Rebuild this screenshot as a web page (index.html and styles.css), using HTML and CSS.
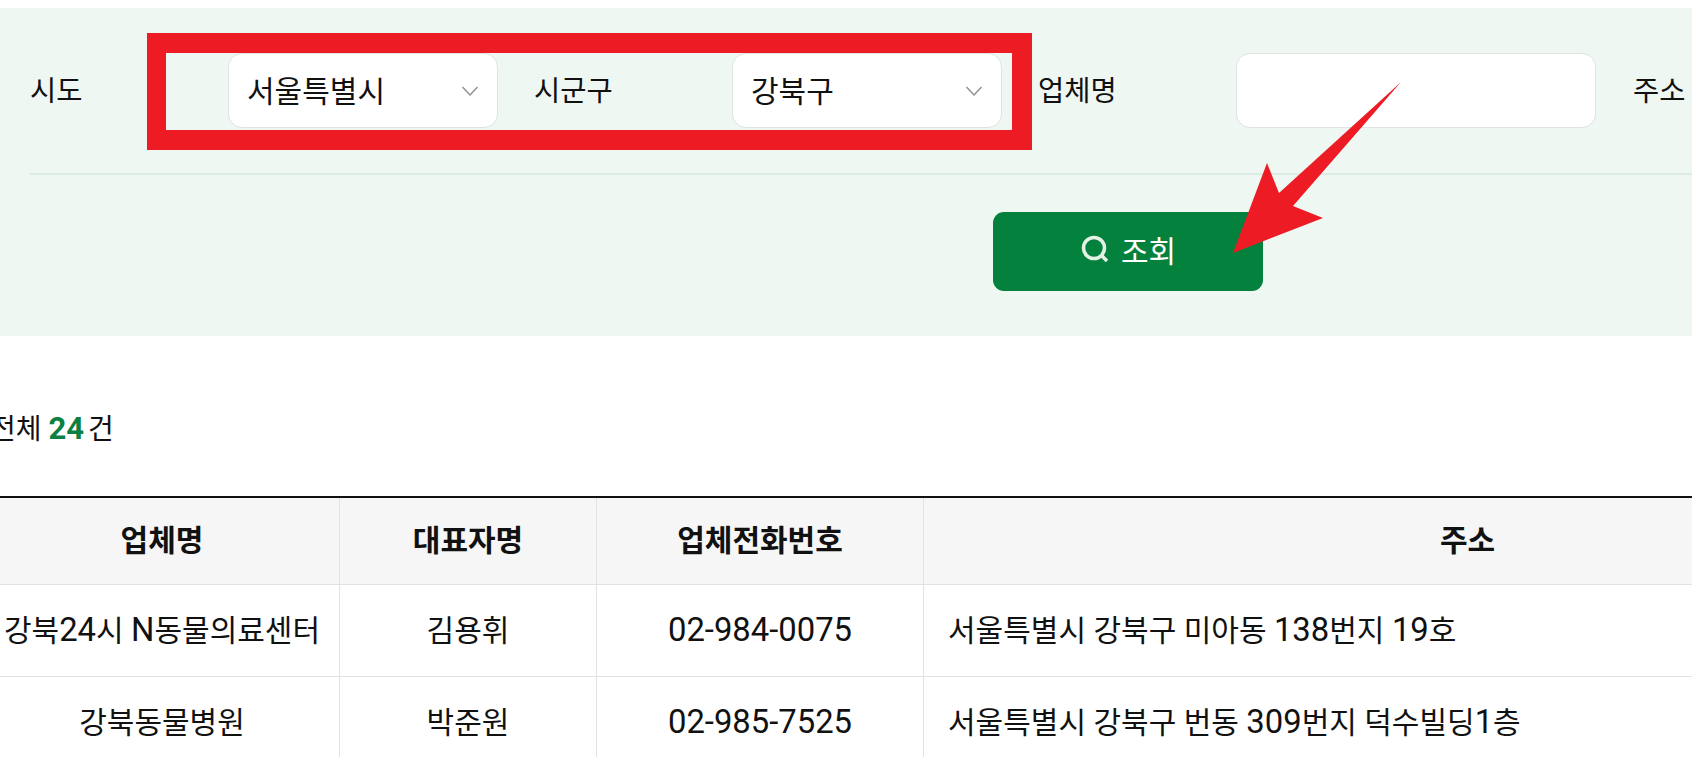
FILE: index.html
```html
<!DOCTYPE html>
<html lang="ko">
<head>
<meta charset="utf-8">
<title>업체 조회</title>
<link rel="stylesheet" href="styles.css">
</head>
<body>
<div class="page">
  <section class="panel">
    <div class="fields">
      <span class="label">시도</span>
      <div class="control select"><span>서울특별시</span><svg class="chev" viewBox="0 0 18 12"><path d="M1.5 2 L9 10 L16.5 2"/></svg></div>
      <span class="label">시군구</span>
      <div class="control select"><span>강북구</span><svg class="chev" viewBox="0 0 18 12"><path d="M1.5 2 L9 10 L16.5 2"/></svg></div>
      <span class="label">업체명</span>
      <div class="control input"></div>
      <span class="label">주소</span>
    </div>
    <div class="actions">
      <button class="search" type="button">
        <svg class="mag" viewBox="0 0 30 30"><circle cx="14" cy="14" r="10.5"/><path d="M21.5 21.5 L27 27"/></svg>
        <span class="search-text">조회</span>
      </button>
    </div>
  </section>
  <div class="wide">
    <p class="total">전체 <b>24</b><span class="unit">건</span></p>
    <table class="list">
      <colgroup><col class="c1"><col class="c2"><col class="c3"><col class="c4"></colgroup>
      <thead>
        <tr><th>업체명</th><th>대표자명</th><th>업체전화번호</th><th>주소</th></tr>
      </thead>
      <tbody>
        <tr><td>강북<span class="num">24</span>시 <span class="num">N</span>동물의료센터</td><td>김용휘</td><td class="phone"><span class="num">02-984-0075</span></td><td class="addr">서울특별시 강북구 미아동 <span class="num">138</span>번지 <span class="num">19</span>호</td></tr>
        <tr><td>강북동물병원</td><td>박준원</td><td class="phone"><span class="num">02-985-7525</span></td><td class="addr">서울특별시 강북구 번동 <span class="num">309</span>번지 덕수빌딩<span class="num">1</span>층</td></tr>
      </tbody>
    </table>
  </div>
  <div class="mark"></div>
  <svg class="arrow" viewBox="0 0 1692 757"><polygon points="1401,82 1293,206 1323,218 1233,253 1267,163 1279,193"/></svg>
</div>
</body>
</html>
```
FILE: styles.css
```css
* { box-sizing: border-box; }
html, body { margin: 0; padding: 0; background: #fff; }
body { font-family: Roboto, "Noto Sans CJK KR", sans-serif; color: #111; }
.page { position: relative; width: 1692px; height: 757px; overflow: hidden; padding-top: 8px; }

.panel { background: #eff7f3; height: 328px; padding: 45px 0 0 30px; }
.fields { display: flex; align-items: center; width: 1800px; padding-bottom: 45px; border-bottom: 2px solid #dcebe4; }
.label { font-size: 28.5px; line-height: 73px; padding-top: 2px; width: 198px; flex: none; }
.control { height: 75px; flex: none; background: #fff; border: 1px solid #dfe3e1; border-radius: 14px; margin-right: 36px; }
.select { width: 270px; display: flex; align-items: center; justify-content: space-between; padding: 0 18px 3px; font-size: 30px; }
.input { width: 360px; margin-right: 37px; }
.chev { width: 18px; height: 12px; fill: none; stroke: #8b8f8d; stroke-width: 1.4; margin-top: 3px; }

.actions { display: flex; padding: 37px 0 0 963px; }
.search { width: 270px; height: 79px; border: 0; border-radius: 11px; background: #04813d; color: #fff; font: inherit; font-size: 30px; display: flex; align-items: center; justify-content: center; gap: 11px; padding: 0 0 5px; }
.mag { width: 30px; height: 30px; fill: none; stroke: #e4f2e6; stroke-width: 3.6; }

.wide { width: 2030px; margin-left: -16px; }
.total { margin: 68px 0 0; padding: 1px 0 0 6px; font-size: 28px; line-height: 48px; height: 92px; }
.total b { color: #0b8043; font-weight: 700; font-size: 31px; }
.unit { margin-left: 4px; }

.list { width: 2027px; table-layout: fixed; border-collapse: collapse; border-top: 2px solid #111; font-size: 30px; }
.c1 { width: 355px; }
.c2 { width: 257px; }
.c3 { width: 327px; }
.c4 { width: 1088px; }
th { height: 87px; background: #f6f6f6; font-weight: 700; text-align: center; border: 1px solid #e2e2e2; border-top: 0; padding: 0 0 6px; }
td { height: 92px; text-align: center; border: 1px solid #e2e2e2; padding: 0 0 4px; }
td.phone { padding-bottom: 0; }
td.addr { text-align: left; padding-left: 24px; }
.num { font-size: 32.8px; }

.mark { position: absolute; left: 147px; top: 33px; width: 885px; height: 117px; border-style: solid; border-color: #ed1c24; border-width: 20px; border-left-width: 19px; }
.arrow { position: absolute; left: 0; top: 0; width: 1692px; height: 757px; fill: #ed1c24; }
```
